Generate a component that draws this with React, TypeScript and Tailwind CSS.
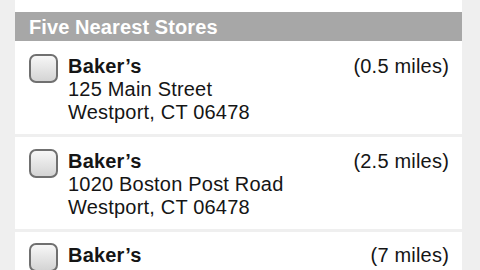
import React from "react";

const stores = [
  { name: "Baker\u2019s", street: "125 Main Street", city: "Westport, CT 06478", dist: "(0.5 miles)" },
  { name: "Baker\u2019s", street: "1020 Boston Post Road", city: "Westport, CT 06478", dist: "(2.5 miles)" },
  { name: "Baker\u2019s", street: "", city: "", dist: "(7 miles)" },
];

function Checkbox() {
  return (
    <div className="-mt-[1px] h-[29px] w-[29px] shrink-0 rounded-[7px] border-2 border-[#707070] bg-gradient-to-b from-[#f7f7f7] to-[#d4d4d4]" />
  );
}

export default function App() {
  return (
    <div
      className="h-[270px] w-[480px] overflow-hidden bg-[#efefef] text-[#151515]"
      style={{ fontFamily: '"Liberation Sans", Arial, sans-serif' }}
    >
      <div className="ml-[15px] flex h-full w-[447px] flex-col gap-[3px]">
        <div className="bg-white pt-[12px]">
          <div className="flex h-[29px] items-center bg-[#a7a7a7] pl-[14px] text-[20px] font-bold leading-none tracking-[0.1px] text-white">
            Five Nearest Stores
          </div>
          <Row s={stores[0]} pt="pt-[14px]" />
        </div>
        <Row s={stores[1]} pt="pt-[13px]" />
        <Row s={stores[2]} pt="pt-[12px]" />
      </div>
    </div>
  );
}

function Row({ s, pt }: { s: (typeof stores)[number]; pt: string }) {
  return (
    <div className={`flex shrink-0 gap-[10px] bg-white pl-[14px] pr-[13px] pb-[10px] ${pt}`}>
      <Checkbox />
      <div className="flex-1 text-[20px] leading-[23px] tracking-[0.2px]">
        <div className="flex justify-between">
          <span className="font-bold">{s.name}</span>
          <span>{s.dist}</span>
        </div>
        {s.street && <div>{s.street}</div>}
        {s.city && <div>{s.city}</div>}
      </div>
    </div>
  );
}
